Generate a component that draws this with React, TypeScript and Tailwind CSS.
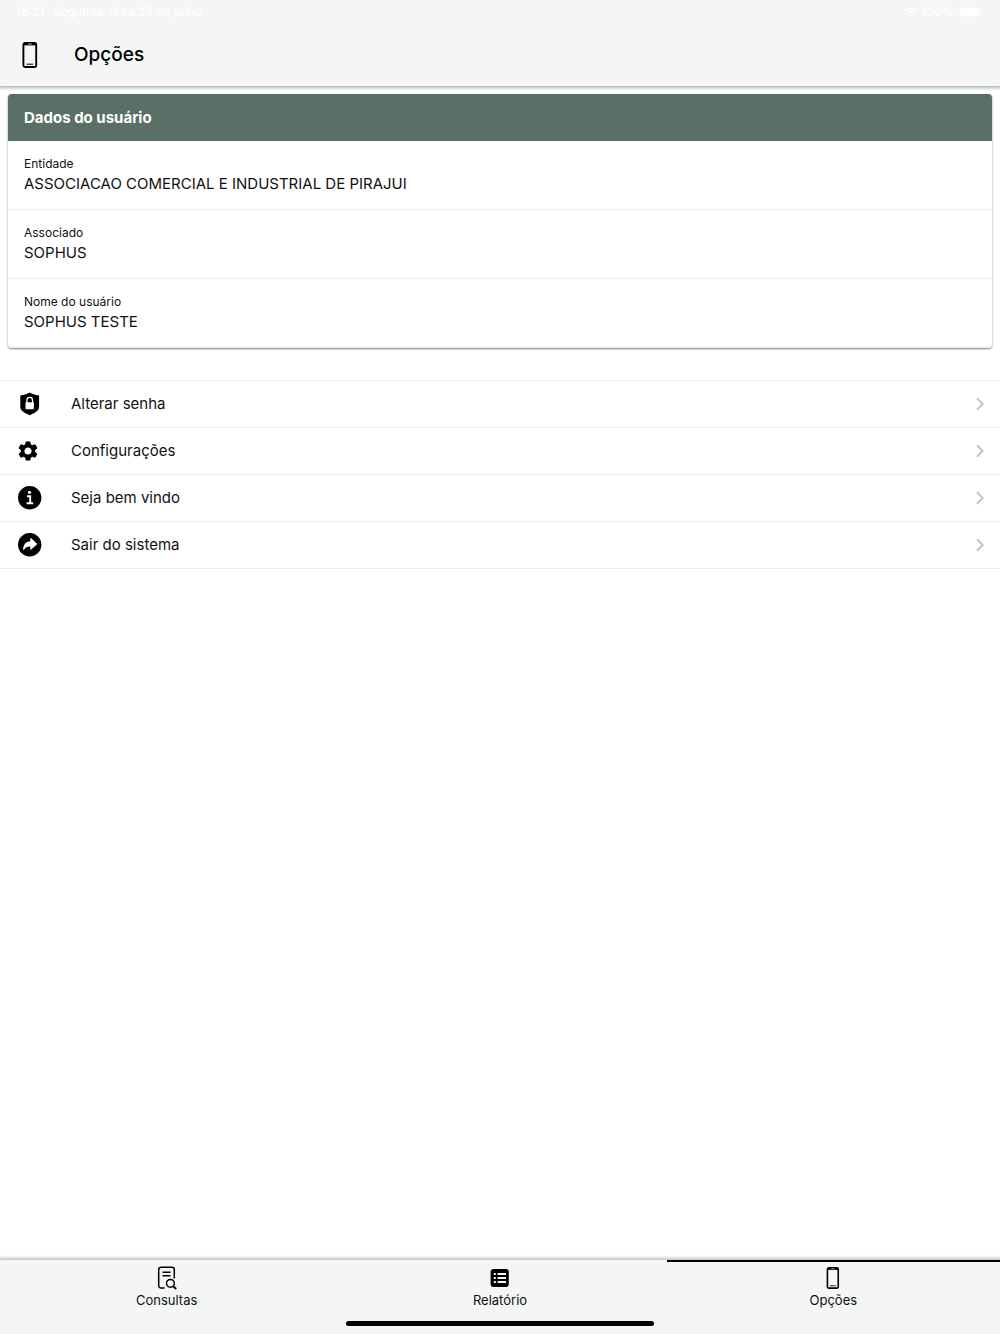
import type { ReactNode } from "react";

type IconProps = { className?: string };

function PhoneIcon({ className }: IconProps) {
  return (
    <svg viewBox="0 0 16 26" className={className} fill="none" aria-hidden="true">
      <rect x="1.4" y="1" width="12.8" height="24" rx="1.8" stroke="currentColor" strokeWidth="1.9" />
      <path d="M2 1h12v2.4H2z" fill="currentColor" />
      <path d="M5.900 2h3.800" stroke="#f4f6f6" strokeWidth="0.7" />
      <path d="M4.800 22.200h6" stroke="currentColor" strokeWidth="1" strokeLinecap="round" />
    </svg>
  );
}

function ShieldLockIcon({ className }: IconProps) {
  return (
    <svg viewBox="0 0 24 24" className={className} aria-hidden="true">
      <path
        fill="currentColor"
        d="M11.700.4c2.600 1.500 5.500 2.500 8.600 2.900.5.100.8.400.8.900v10.300c0 2-.8 3.600-2.300 4.800-2 1.600-4.500 2.900-7.100 3.900-2.600-1-5.100-2.300-7.100-3.900-1.500-1.200-2.300-2.800-2.300-4.800V4.200c0-.5.300-.8.800-.9C6.200 2.900 9.100 1.900 11.700.4z"
      />
      <path d="M8.900 11V8.200a2.800 2.800 0 0 1 5.600 0V11" fill="none" stroke="#fff" strokeWidth="1.300" />
      <rect x="7.500" y="10.200" width="8.400" height="7" rx=".6" fill="#fff" />
    </svg>
  );
}

function GearIcon({ className }: IconProps) {
  return (
    <svg viewBox="0 0 24 24" className={className} aria-hidden="true">
      <path
        fill="currentColor"
        d="M19.140 12.940c.04-.3.060-.61.060-.94 0-.32-.02-.64-.07-.94l2.030-1.580a.49.49 0 0 0 .12-.61l-1.920-3.320a.488.488 0 0 0-.59-.22l-2.390.96c-.5-.38-1.030-.7-1.620-.94l-.36-2.540a.484.484 0 0 0-.48-.41h-3.840c-.24 0-.43.170-.47.410l-.36 2.540c-.59.240-1.130.570-1.620.940l-2.390-.96c-.22-.08-.47 0-.59.220L2.740 8.870c-.12.210-.08.470.12.610l2.030 1.580c-.05.300-.09.630-.09.940s.02.640.070.940l-2.030 1.580a.49.49 0 0 0-.12.610l1.920 3.320c.12.220.37.290.59.220l2.390-.96c.5.380 1.030.700 1.620.940l.36 2.540c.05.240.240.410.480.410h3.840c.24 0 .44-.17.470-.41l.36-2.540c.59-.24 1.130-.56 1.620-.94l2.390.96c.22.080.470 0 .59-.22l1.920-3.320c.12-.22.070-.47-.12-.61l-2.010-1.580zM12 15.600A3.610 3.610 0 0 1 8.400 12c0-1.980 1.620-3.600 3.600-3.600s3.600 1.620 3.600 3.600-1.620 3.600-3.600 3.600z"
      />
    </svg>
  );
}

function InfoIcon({ className }: IconProps) {
  return (
    <svg viewBox="0 0 24 24" className={className} aria-hidden="true">
      <circle cx="11.700" cy="11.700" r="11.700" fill="currentColor" />
      <circle cx="11.500" cy="6.300" r="1.600" fill="#fff" />
      <path d="M9 10.200H12.200V17.200M8.600 17.200H15.100" fill="none" stroke="#fff" strokeWidth="1.900" />
    </svg>
  );
}

function ShareIcon({ className }: IconProps) {
  return (
    <svg viewBox="0 0 24 24" className={className} aria-hidden="true">
      <circle cx="11.700" cy="11.700" r="11.700" fill="currentColor" />
      <path
        fill="#fff"
        d="M12.300 5.600c0-.5.500-.7.900-.4l5.600 5.200c.3.300.3.700 0 1l-5.600 5.200c-.4.300-.9.100-.9-.4v-2.800c-3-.1-4.600.6-6.300 3.400-.2.300-.9.200-.9-.3.200-4.700 2.500-7.700 7.200-8.200z"
      />
    </svg>
  );
}

function DocSearchIcon({ className }: IconProps) {
  return (
    <svg
      viewBox="0 0 24 24"
      className={className}
      fill="none"
      stroke="currentColor"
      strokeWidth="1.500"
      aria-hidden="true"
    >
      <path d="M9.500 22H6a2.300 2.300 0 0 1-2.300-2.300V3.500A2.300 2.300 0 0 1 6 1.200h11a2.300 2.300 0 0 1 2.300 2.300v9" />
      <path d="M7.500 6.200h8M7.500 9.800h8" />
      <circle cx="15.400" cy="17.300" r="3.900" />
      <path d="M18.200 20.200l3 2.800" strokeWidth="2" />
    </svg>
  );
}

function ListIcon({ className }: IconProps) {
  return (
    <svg viewBox="0 0 24 24" className={className} aria-hidden="true">
      <rect x="2.600" y="3" width="18.200" height="18" rx="3" fill="currentColor" />
      <path d="M5.800 8h2M5.800 12h2M5.800 16h2M9.600 8h8.400M9.600 12h8.400M9.600 16h8.400" stroke="#f4f6f6" strokeWidth="1.800" />
    </svg>
  );
}

function ChevronIcon({ className }: IconProps) {
  return (
    <svg viewBox="0 0 8 14" className={className} fill="none" aria-hidden="true">
      <path d="M1 1.300L6.700 7L1 12.700" stroke="currentColor" strokeWidth="2" />
    </svg>
  );
}

const userData = [
  { label: "Entidade", value: "ASSOCIACAO COMERCIAL E INDUSTRIAL DE PIRAJUI" },
  { label: "Associado", value: "SOPHUS" },
  { label: "Nome do usuário", value: "SOPHUS TESTE" },
];

const options: { label: string; icon: ReactNode }[] = [
  { label: "Alterar senha", icon: <ShieldLockIcon className="size-6" /> },
  { label: "Configurações", icon: <GearIcon className="-ml-0.5 size-6" /> },
  { label: "Seja bem vindo", icon: <InfoIcon className="size-6" /> },
  { label: "Sair do sistema", icon: <ShareIcon className="size-6" /> },
];

const tabs = [
  { label: "Consultas", icon: DocSearchIcon, size: "size-6", active: false },
  { label: "Relatório", icon: ListIcon, size: "size-6", active: false },
  { label: "Opções", icon: PhoneIcon, size: "h-[22px] w-[14px]", active: true },
];

function StatusBar() {
  return (
    <div className="flex h-6 items-center justify-between px-4 text-xs font-medium text-white">
      <div className="flex gap-2">
        <span>16:13</span>
        <span>Segunda-feira 25 de julho</span>
      </div>
      <div className="flex items-center gap-1">
        <svg viewBox="0 0 14 10" className="h-[10px] w-[14px]" fill="none" stroke="currentColor" aria-hidden="true">
          <path d="M1 3.600a8.600 8.600 0 0 1 12 0M3.200 6a5.400 5.400 0 0 1 7.600 0" strokeWidth="1.700" />
          <path d="M7 9.800L5 7.900a2.800 2.800 0 0 1 4 0z" fill="currentColor" stroke="none" />
        </svg>
        <span>100%</span>
        <svg viewBox="0 0 26 12" className="h-3 w-[26px]" aria-hidden="true">
          <rect x=".5" y=".5" width="22.500" height="11" rx="3" fill="none" stroke="currentColor" strokeOpacity=".4" />
          <rect x="2" y="2" width="19.500" height="8" rx="2" fill="currentColor" />
          <path d="M24.300 4v4c1.300-.6 1.300-3.400 0-4z" fill="currentColor" fillOpacity=".5" />
        </svg>
      </div>
    </div>
  );
}

export default function App() {
  return (
    <div className="flex min-h-screen flex-col bg-white font-['Inter','Liberation_Sans',sans-serif] text-[#111]">
      <header className="bg-[#f4f6f6] shadow-[0_1px_3px_1px_rgba(0,0,0,0.3)]">
        <StatusBar />
        <div className="flex h-[62px] items-center gap-9 px-[22px]">
          <PhoneIcon className="h-[26px] w-4 text-black" />
          <h1 className="text-[19px] font-medium text-black">Opções</h1>
        </div>
      </header>

      <main className="flex-1">
        {/* User card */}
        <section className="mx-2 mt-2 overflow-hidden rounded bg-white shadow-[0_1px_2px_rgba(0,0,0,0.5)]">
          <h2 className="bg-[#5a7067] px-4 py-3 text-[15px] leading-[23px] font-bold text-white">
            Dados do usuário
          </h2>
          <dl>
            {userData.map((item) => (
              <div key={item.label} className="border-b border-[#ececec] px-4 pt-[15px] pb-[13px]">
                <dt className="text-xs leading-4">{item.label}</dt>
                <dd className="text-[15px] leading-6">{item.value}</dd>
              </div>
            ))}
          </dl>
        </section>

        {/* Options */}
        <ul className="mt-8 border-t border-[#ececec]">
          {options.map((option) => (
            <li key={option.label} className="border-b border-[#ececec]">
              <button type="button" className="flex h-[46px] w-full items-center pr-4 pl-[18px] text-left">
                <span className="flex w-[53px] text-black">{option.icon}</span>
                <span className="flex-1 text-[15px]">{option.label}</span>
                <ChevronIcon className="h-[14px] w-2 text-[#c4c4c6]" />
              </button>
            </li>
          ))}
        </ul>
      </main>

      <footer className="bg-[#f4f6f6] shadow-[0_-1px_3px_1px_rgba(0,0,0,0.25)]">
        <nav className="grid grid-cols-3">
          {tabs.map(({ label, icon: Icon, size, active }) => (
            <a
              key={label}
              href="#"
              aria-current={active ? "page" : undefined}
              className={`flex h-[61px] flex-col items-center border-t-2 pt-1 ${
                active ? "border-black" : "border-transparent"
              }`}
            >
              <span className="flex h-6 items-center text-black">
                <Icon className={size} />
              </span>
              <span className="text-[13px] leading-5">{label}</span>
            </a>
          ))}
        </nav>
        <div className="mx-auto mb-2 h-[5px] w-[308px] rounded-full bg-black" />
      </footer>
    </div>
  );
}
